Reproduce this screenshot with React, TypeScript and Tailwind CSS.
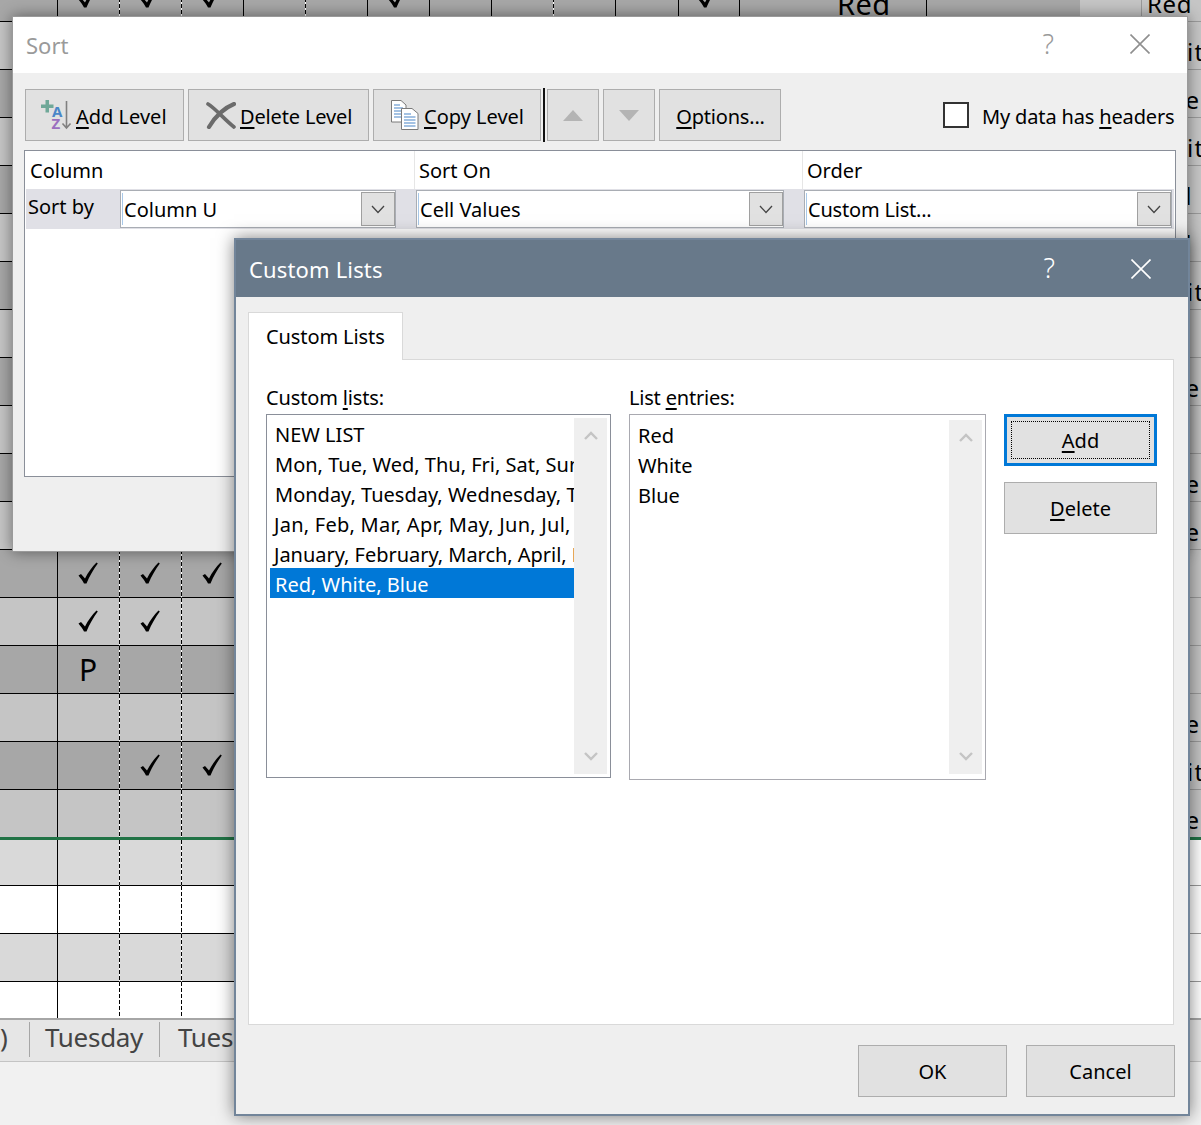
import React from 'react';

const cols = [
  { w: 'w-[58px]', dash: false },
  { w: 'w-[62px]', dash: true },
  { w: 'w-[62px]', dash: true },
  { w: 'w-[62px]', dash: false },
  { w: 'w-[62px]', dash: true },
  { w: 'w-[62px]', dash: false },
  { w: 'w-[62px]', dash: false },
  { w: 'w-[62px]', dash: false },
  { w: 'w-[62px]', dash: true },
  { w: 'w-[62px]', dash: false },
  { w: 'w-[63px]', dash: false },
  { w: 'w-[61px]', dash: false },
  { w: 'w-[187px]', dash: false },
];

type Row = { h: string; bg: string; line: boolean; marks?: Record<number, string>; name?: string; right: string };
const D = 'bg-[#a7a7a7]';
const L = 'bg-[#c5c5c5]';
const G = 'bg-[#d9d9d9]';
const W = 'bg-white';
const rows: Row[] = [
  { h: 'h-[48px]', bg: D, line: true, marks: { 1: 'c', 2: 'c', 3: 'c', 6: 'c', 11: 'c' }, name: 'Red', right: L },
  { h: 'h-[48px]', bg: L, line: true, name: 'White', right: L },
  { h: 'h-[48px]', bg: D, line: true, name: 'Blue', right: L },
  { h: 'h-[48px]', bg: L, line: true, name: 'White', right: L },
  { h: 'h-[48px]', bg: D, line: true, name: 'Red', right: L },
  { h: 'h-[48px]', bg: L, line: true, name: 'Red', right: L },
  { h: 'h-[48px]', bg: D, line: true, name: 'White', right: L },
  { h: 'h-[48px]', bg: L, line: true, right: L },
  { h: 'h-[48px]', bg: D, line: true, name: 'Blue', right: L },
  { h: 'h-[48px]', bg: L, line: true, right: L },
  { h: 'h-[48px]', bg: D, line: true, name: 'Blue', right: L },
  { h: 'h-[48px]', bg: L, line: true, name: 'Blue', right: L },
  { h: 'h-[48px]', bg: D, line: true, marks: { 1: 'c', 2: 'c', 3: 'c' }, right: L },
  { h: 'h-[48px]', bg: L, line: true, marks: { 1: 'c', 2: 'c' }, right: L },
  { h: 'h-[48px]', bg: D, line: true, marks: { 1: 'P' }, right: L },
  { h: 'h-[48px]', bg: L, line: true, name: 'Blue', right: L },
  { h: 'h-[48px]', bg: D, line: true, marks: { 2: 'c', 3: 'c' }, name: 'White', right: L },
  { h: 'h-[47px]', bg: L, line: false, name: 'Blue', right: L },
];
const rowsBelow: Row[] = [
  { h: 'h-[46px]', bg: G, line: true, right: W },
  { h: 'h-[48px]', bg: W, line: true, right: W },
  { h: 'h-[48px]', bg: G, line: true, right: W },
  { h: 'h-[36px]', bg: W, line: false, right: W },
];

function Check() {
  return (
    <svg width="20" height="22" viewBox="0 0 20 22" className="shrink-0 -ml-[2px] -mt-[2px]">
      <path d="M0.5 13.5 L3 12 L7 16.5 C10 10.5 14 5 18.5 0.5 L19.8 1.5 C15.5 7.5 11.5 14 8.5 21.5 L6 21.5 C4.5 18.5 2.5 16 0.5 13.5 Z" fill="#000" />
    </svg>
  );
}

function SheetRow({ r }: { r: Row }) {
  return (
    <div className={`flex bg-white ${r.h}`}>
      {cols.map((c, i) => (
        <div
          key={i}
          className={`${c.w} ${r.bg} bg-clip-padding border-r shrink-0 flex items-center justify-center relative ${c.dash ? 'border-r-transparent' : 'border-r-black'} ${r.line ? 'border-b border-b-black' : ''}`}
        >
          {c.dash && (
            <div className="absolute top-0 bottom-0 right-[-1px] w-px bg-[repeating-linear-gradient(to_bottom,#000_0_4px,transparent_4px_6px)]" />
          )}
          {r.marks?.[i] === 'c' && <Check />}
          {r.marks?.[i] === 'P' && <span className="text-[30px] leading-none text-black -ml-[1px]">P</span>}
          {i === 12 && r.marks?.[11] && (
            <span className="absolute left-[97px] bottom-[0px] text-[29px] leading-[34px] tracking-[0.4px] text-black">Red</span>
          )}
        </div>
      ))}
      <div className={`w-[153px] shrink-0 ${r.bg} ${r.line ? 'border-b border-b-black' : ''}`} />
      <div className={`w-[62px] shrink-0 border-r border-[#9a9a9a] ${r.right} ${r.line ? 'border-b border-b-[#9a9a9a]' : ''}`} />
      <div className={`w-[59px] shrink-0 relative overflow-hidden flex items-end pl-[5px] ${r.right} ${r.line ? 'border-b border-[#9a9a9a]' : ''}`}>
        {r.name && (
          <span className={`text-[24px] leading-[30px] pb-[2px] text-black whitespace-nowrap ${r.name === 'White' ? 'tracking-[1.4px]' : 'tracking-[0.6px]'}`}>
            {r.name}
          </span>
        )}
      </div>
    </div>
  );
}

function Sheet() {
  return (
    <div className="flex flex-col h-full">
      <div className="mt-[-26px] flex flex-col">
        {rows.map((r, i) => <SheetRow key={i} r={r} />)}
        <div className="h-[3px] bg-[#217346] shrink-0" />
        {rowsBelow.map((r, i) => <SheetRow key={i} r={r} />)}
      </div>
      <div className="h-[44px] shrink-0 bg-[#e6e6e6] border-t-2 border-b border-t-[#a6a6a6] border-b-[#c4c4c4] flex items-start pt-[2px] text-[26px] text-[#444444]">
        <div className="w-[30px] h-[35px] pb-[5px] border-r border-[#a6a6a6] flex items-center leading-none">)</div>
        <div className="w-[130px] h-[35px] pb-[5px] pl-[15px] border-r border-[#a6a6a6] flex items-center leading-none tracking-[-0.3px]">Tuesday</div>
        <div className="pl-[18px] h-[35px] pb-[5px] flex items-center leading-none tracking-[-0.3px]">Tuesday</div>
      </div>
      <div className="flex-1 bg-[#f1f1f1]" />
    </div>
  );
}

function Cross({ color }: { color: string }) {
  return (
    <svg width="20" height="20" viewBox="0 0 20 20" className="shrink-0">
      <path d="M0.5 0.5 L19.5 19.5 M19.5 0.5 L0.5 19.5" stroke={color} strokeWidth="1.6" fill="none" />
    </svg>
  );
}

function Chevron() {
  return (
    <svg width="14" height="9" viewBox="0 0 14 9">
      <path d="M1 1 L7 7.5 L13 1" stroke="#444" strokeWidth="1.3" fill="none" />
    </svg>
  );
}

function SelectBox({ w, label, track = '' }: { w: string; label: string; track?: string }) {
  return (
    <div className={`${w} h-[38px] shrink-0 bg-white border border-[#a9adb4] flex items-center relative`}>
      <div className="w-px h-[32px] ml-[1px] bg-[#a8c8e8]" />
      <span className={`ml-[1px] flex-1 leading-none pt-[1px] ${track}`}>{label}</span>
      <div className="w-[34px] h-[34px] bg-[#e1e1e1] border border-[#a0a0a0] flex items-center justify-center">
        <Chevron />
      </div>
    </div>
  );
}

function ToolBtn({ w, children, className = '' }: { w: string; children: React.ReactNode; className?: string }) {
  return (
    <div className={`${w} h-[52px] shrink-0 bg-[#e1e1e1] border border-[#adadad] flex items-center ${className}`}>
      {children}
    </div>
  );
}

const U = ({ children }: { children: React.ReactNode }) => (
  <span className="underline decoration-[2px] underline-offset-[3px] [text-decoration-skip-ink:none]">{children}</span>
);

function AddIcon() {
  return (
    <svg width="32" height="30" viewBox="0 0 32 30" className="shrink-0">
      <path d="M4.5 0 H8 V4.5 H12.5 V8 H8 V12.5 H4.5 V8 H0 V4.5 H4.5 Z" fill="#6fa898" />
      <text x="11" y="17" fontSize="15" fontWeight="700" fill="#4a86c8" fontFamily="Noto Sans">A</text>
      <text x="10.5" y="29" fontSize="15" fontWeight="700" fill="#9b6fbf" fontFamily="Noto Sans">Z</text>
      <path d="M25.5 1 V28 M21.5 23.5 L25.5 28 L29.5 23.5" stroke="#808080" strokeWidth="1.6" fill="none" />
    </svg>
  );
}

function DeleteIcon() {
  return (
    <svg width="30" height="27" viewBox="0 0 30 27" className="shrink-0">
      <path d="M2 2 C10 7 18 17 28 25" stroke="#6b6b6b" strokeWidth="3.6" fill="none" strokeLinecap="round" />
      <path d="M28 2 C18 6 9 15 3 25" stroke="#6b6b6b" strokeWidth="4.2" fill="none" strokeLinecap="round" />
    </svg>
  );
}

function CopyIcon() {
  return (
    <svg width="28" height="30" viewBox="0 0 28 30" className="shrink-0">
      <path d="M0.5 0.5 H10 L15 5 V22 H0.5 Z" fill="#fff" stroke="#7a7a7a" />
      <path d="M3 5 H9 M3 8 H12 M3 11 H12 M3 14 H12 M3 17 H12" stroke="#4a86c8" strokeWidth="1.2" />
      <path d="M10.5 8.5 H21 L27 13.5 V29.5 H10.5 Z" fill="#fff" stroke="#7a7a7a" />
      <path d="M13 14 H20 M13 17 H24.5 M13 20 H24.5 M13 23 H24.5 M13 26 H24.5" stroke="#4a86c8" strokeWidth="1.2" />
    </svg>
  );
}

function SortDialog() {
  return (
    <div className="absolute left-[12px] top-[16px] w-[1176px] h-[536px] border border-[#9a9a9a] bg-[#efefef] shadow-[0_0_14px_rgba(0,0,0,0.45)] flex flex-col">
      <div className="h-[56px] shrink-0 bg-white flex items-center pl-[13px] text-[#9a9a9a]">
        <span className="text-[22px] leading-none">Sort</span>
        <span className="ml-auto text-[27px] leading-none -mt-[3px] font-light">?</span>
        <div className="ml-[76px] mr-[37px] -mt-[2px]"><Cross color="#8f8f8f" /></div>
      </div>
      <div className="flex mt-[16px] ml-[12px] items-center">
        <ToolBtn w="w-[159px]" className="pl-[15px]">
          <AddIcon />
          <span className="ml-[3px] leading-none pt-[3px]"><U>A</U>dd Level</span>
        </ToolBtn>
        <ToolBtn w="w-[181px] ml-[4px]" className="pl-[17px]">
          <DeleteIcon />
          <span className="ml-[4px] leading-none pt-[3px] tracking-[-0.15px]"><U>D</U>elete Level</span>
        </ToolBtn>
        <ToolBtn w="w-[168px] ml-[4px]" className="pl-[17px]">
          <CopyIcon />
          <span className="ml-[5px] leading-none pt-[3px]"><U>C</U>opy Level</span>
        </ToolBtn>
        <div className="w-[2px] h-[54px] -my-px ml-[2px] bg-[#111111]" />
        <ToolBtn w="w-[52px] ml-[2px]" className="justify-center">
          <div className="w-0 h-0 border-x-[10px] border-x-transparent border-b-[11px] border-b-[#b4b4b4]" />
        </ToolBtn>
        <ToolBtn w="w-[52px] ml-[4px]" className="justify-center">
          <div className="w-0 h-0 border-x-[10px] border-x-transparent border-t-[11px] border-t-[#b4b4b4]" />
        </ToolBtn>
        <ToolBtn w="w-[122px] ml-[4px]" className="justify-center">
          <span className="leading-none pt-[3px] tracking-[-0.2px] ml-[1px]"><U>O</U>ptions...</span>
        </ToolBtn>
        <div className="w-[26px] h-[26px] ml-[162px] bg-white border-2 border-[#333333]" />
        <span className="ml-[13px] leading-none whitespace-nowrap pt-[3px] tracking-[-0.15px]">My data has <U>h</U>eaders</span>
      </div>
      <div className="mt-[9px] ml-[11px] w-[1152px] h-[327px] bg-white border border-[#8a8f99] flex flex-col">
        <div className="h-[38px] flex">
          <div className="w-[390px] pl-[5px] pt-[1px] flex items-center border-r border-[#e6e6e6] leading-none">Column</div>
          <div className="w-[388px] pl-[4px] pt-[1px] flex items-center border-r border-[#e6e6e6] leading-none">Sort On</div>
          <div className="pl-[4px] pt-[1px] flex items-center leading-none">Order</div>
        </div>
        <div className="h-[40px] mx-[1px] bg-[#e0e0e6] flex items-center">
          <span className="w-[94px] pl-[2px] leading-none pb-[5px]">Sort by</span>
          <SelectBox w="w-[276px]" label="Column U" />
          <SelectBox w="w-[368px] ml-[20px]" label="Cell Values" />
          <SelectBox w="w-[368px] ml-[20px]" label="Custom List..." track="tracking-[-0.2px]" />
        </div>
      </div>
    </div>
  );
}

function ScrollBar({ h }: { h: string }) {
  return (
    <div className={`w-[33px] ${h} shrink-0 bg-[#efefef] flex flex-col items-center justify-between py-[13px]`}>
      <svg width="14" height="9" viewBox="0 0 14 9"><path d="M1 8 L7 2 L13 8" stroke="#c4c4c4" strokeWidth="2.4" fill="none" /></svg>
      <svg width="14" height="9" viewBox="0 0 14 9"><path d="M1 1 L7 7 L13 1" stroke="#c4c4c4" strokeWidth="2.4" fill="none" /></svg>
    </div>
  );
}

const items = [
  { t: 'NEW LIST', c: '' },
  { t: 'Mon, Tue, Wed, Thu, Fri, Sat, Sun', c: '' },
  { t: 'Monday, Tuesday, Wednesday, Thursday', c: '' },
  { t: 'Jan, Feb, Mar, Apr, May, Jun, Jul, Aug', c: 'tracking-[0.25px] -ml-px' },
  { t: 'January, February, March, April, May', c: 'tracking-[-0.03px] -ml-px' },
  { t: 'Red, White, Blue', c: 'bg-[#0078d7] text-white' },
];

function CustomDialog() {
  return (
    <div className="absolute left-[234px] top-[238px] w-[956px] h-[878px] border-2 border-[#72859a] bg-[#efefef] shadow-[0_0_16px_rgba(0,0,0,0.5)] flex flex-col">
      <div className="h-[57px] shrink-0 bg-[#68798a] flex items-center pl-[13px] text-white">
        <span className="text-[22px] leading-none pt-[1px] tracking-[0.15px]">Custom Lists</span>
        <span className="ml-auto text-[27px] leading-none -mt-[2px] font-light">?</span>
        <div className="ml-[76px] mr-[37px]"><Cross color="#ffffff" /></div>
      </div>
      <div className="ml-[12px] mt-[15px] w-[155px] h-[48px] bg-white border border-b-0 border-[#d9d9d9] flex items-center pl-[17px] pt-[1px] relative z-10 -mb-px leading-none tracking-[-0.1px]">
        Custom Lists
      </div>
      <div className="ml-[12px] w-[926px] h-[666px] bg-white border border-[#d9d9d9] flex pl-[17px] pt-[24px]">
        <div className="w-[345px] shrink-0">
          <div className="h-[30px] leading-none pt-[4px] tracking-[-0.15px]">Custom <U>l</U>ists:</div>
          <div className="h-[364px] border border-[#8a8f99] flex pl-[3px] pt-[3px]">
            <div className="w-[304px] shrink-0 overflow-hidden">
              {items.map((it, i) => (
                <div
                  key={i}
                  className={`h-[30px] pl-[5px] pt-[4px] flex items-center whitespace-nowrap leading-none ${it.c}`}
                >
                  {it.t}
                </div>
              ))}
            </div>
            <ScrollBar h="h-[356px]" />
          </div>
        </div>
        <div className="w-[357px] ml-[18px] shrink-0">
          <div className="h-[30px] leading-none pt-[4px] tracking-[-0.2px]">List <U>e</U>ntries:</div>
          <div className="h-[366px] border border-[#a9a9b0] flex justify-between pl-[8px] pr-[3px] pt-[5px]">
            <div className="pt-[1px]">
              {['Red', 'White', 'Blue'].map((t) => (
                <div key={t} className="h-[30px] flex items-center leading-none">{t}</div>
              ))}
            </div>
            <ScrollBar h="h-[354px]" />
          </div>
        </div>
        <div className="w-[153px] ml-[18px] shrink-0 pt-[30px]">
          <div className="h-[52px] bg-[#e1e1e1] border-[3px] border-[#0078d7] p-[4px]">
            <div className="h-full border border-dotted border-black flex items-center justify-center leading-none pt-[2px]">
              <span><U>A</U>dd</span>
            </div>
          </div>
          <div className="h-[52px] mt-[16px] bg-[#e1e1e1] border border-[#adadad] flex items-center justify-center leading-none pt-[2px]">
            <span><U>D</U>elete</span>
          </div>
        </div>
      </div>
      <div className="flex mt-[20px] ml-[622px]">
        <div className="w-[149px] h-[52px] bg-[#e1e1e1] border border-[#adadad] flex items-center justify-center leading-none pt-[2px]">OK</div>
        <div className="w-[149px] h-[52px] ml-[19px] bg-[#e1e1e1] border border-[#adadad] flex items-center justify-center leading-none pt-[2px]">Cancel</div>
      </div>
    </div>
  );
}

export default function App() {
  return (
    <div className="relative w-[1201px] h-[1125px] overflow-hidden bg-white font-['Noto_Sans',sans-serif] text-[20px] text-black">
      <Sheet />
      <SortDialog />
      <CustomDialog />
    </div>
  );
}
